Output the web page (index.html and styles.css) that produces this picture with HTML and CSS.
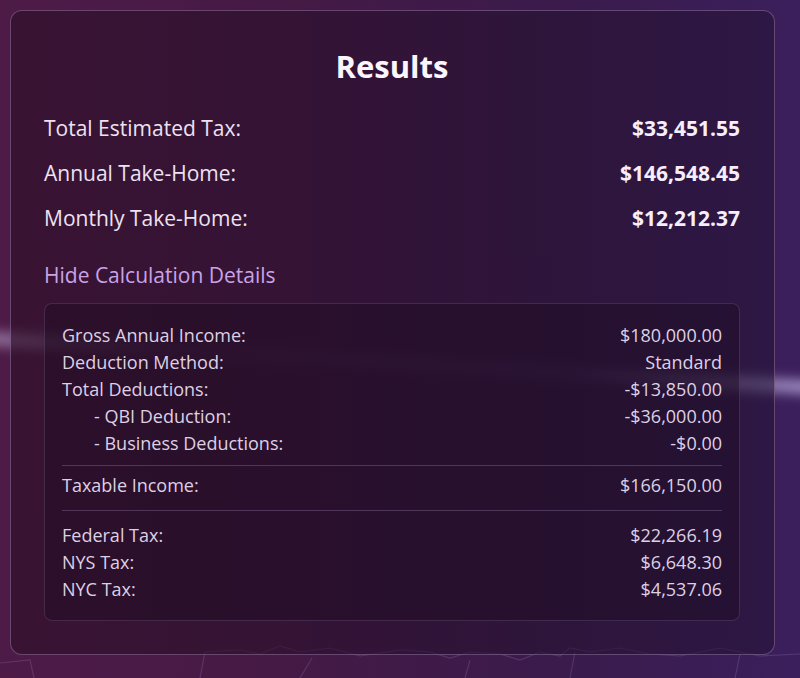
FILE: index.html
```html
<!DOCTYPE html>
<html>
<head>
<meta charset="utf-8">
<link rel="stylesheet" href="styles.css">
</head>
<body>
<div class="backdrop">
  <div class="streak"></div>
  <svg class="waves" width="800" height="40" viewBox="0 0 800 40">
    <polyline points="0,25 30,22 34,40" />
    <polyline points="200,40 205,14 240,12 260,16 280,8 300,14 330,10 360,18 400,12 430,14 450,20 470,14 500,16 520,22 540,14 560,18 570,10 590,14 620,10 650,16 680,18 700,14 720,10 760,18 800,16" />
    <polyline points="300,40 312,20" />
    <polyline points="465,40 470,22" />
    <polyline points="570,40 575,14" />
    <polyline points="735,40 740,16" />
  </svg>
</div>
<main class="card">
  <h2 class="title">Results</h2>
  <div class="summary">
    <div class="row"><span>Total Estimated Tax:</span><strong>$33,451.55</strong></div>
    <div class="row"><span>Annual Take-Home:</span><strong>$146,548.45</strong></div>
    <div class="row"><span>Monthly Take-Home:</span><strong>$12,212.37</strong></div>
  </div>
  <button class="toggle">Hide Calculation Details</button>
  <section class="details">
    <div class="group">
      <div class="drow"><span>Gross Annual Income:</span><span>$180,000.00</span></div>
      <div class="drow"><span>Deduction Method:</span><span>Standard</span></div>
      <div class="drow"><span>Total Deductions:</span><span>-$13,850.00</span></div>
      <div class="drow sub"><span>- QBI Deduction:</span><span>-$36,000.00</span></div>
      <div class="drow sub"><span>- Business Deductions:</span><span>-$0.00</span></div>
    </div>
    <div class="group taxable">
      <div class="drow"><span>Taxable Income:</span><span>$166,150.00</span></div>
    </div>
    <div class="group taxes">
      <div class="drow"><span>Federal Tax:</span><span>$22,266.19</span></div>
      <div class="drow"><span>NYS Tax:</span><span>$6,648.30</span></div>
      <div class="drow"><span>NYC Tax:</span><span>$4,537.06</span></div>
    </div>
  </section>
</main>
</body>
</html>
```

FILE: styles.css
```css
* { box-sizing: border-box; }
html, body { margin: 0; padding: 0; }
body {
  width: 800px;
  height: 678px;
  overflow: hidden;
  position: relative;
  font-family: "Open Sans", "Noto Sans", sans-serif;
  background: linear-gradient(90deg, #4e1b47 0%, #451a45 35%, #3a1b4c 70%, #3b1f5c 100%);
  padding: 10px 25px 0 10px;
}
.backdrop {
  position: absolute;
  inset: 0;
  z-index: 0;
  pointer-events: none;
}
.streak {
  position: absolute;
  left: -40px;
  top: 356px;
  width: 880px;
  height: 14px;
  background: linear-gradient(90deg, rgba(210,200,240,0.55) 0%, rgba(170,150,220,0.12) 25%, rgba(170,150,220,0.16) 70%, rgba(215,205,250,0.7) 100%);
  filter: blur(6px);
  transform: rotate(3.4deg);
}
.waves {
  position: absolute;
  left: 0;
  bottom: 0;
}
.waves polyline {
  fill: none;
  stroke: rgba(170,140,210,0.22);
  stroke-width: 1.2;
}
.card {
  position: relative;
  z-index: 1;
  width: 765px;
  height: 645px;
  border: 1px solid rgba(200,170,220,0.35);
  border-radius: 12px;
  background: linear-gradient(90deg, rgba(45,14,38,0.62) 0%, rgba(40,16,45,0.6) 50%, rgba(35,18,52,0.55) 100%);
  padding: 36px 34px 0 33px;
  color: #efe6f4;
}
.title {
  margin: 0 0 29px;
  text-align: center;
  font-size: 31px;
  line-height: 38px;
  font-weight: 700;
  color: #fbf6fd;
}
.summary {
  display: flex;
  flex-direction: column;
  gap: 17px;
}
.row {
  display: flex;
  justify-content: space-between;
  align-items: center;
  font-size: 21px;
  line-height: 28px;
  color: #ece2f2;
}
.row strong {
  font-weight: 700;
  color: #f6eefa;
}
.toggle {
  display: block;
  margin: 29px 0 14px;
  padding: 0;
  border: 0;
  background: none;
  font: inherit;
  font-size: 21px;
  line-height: 28px;
  color: #c9a3e6;
  cursor: pointer;
}
.details {
  border: 1px solid rgba(190,160,215,0.18);
  border-radius: 8px;
  background: rgba(28,12,34,0.45);
  padding: 18px 17px 0 17px;
  height: 318px;
}
.group.taxable {
  border-top: 1px solid rgba(200,170,220,0.25);
  margin-top: 8px;
  padding-top: 6px;
}
.group.taxes {
  border-top: 1px solid rgba(200,170,220,0.25);
  margin-top: 11px;
  padding-top: 11px;
}
.drow {
  display: flex;
  justify-content: space-between;
  font-size: 18px;
  line-height: 27px;
  color: #ddd0e4;
}
.drow.sub span:first-child {
  padding-left: 32px;
}
```
